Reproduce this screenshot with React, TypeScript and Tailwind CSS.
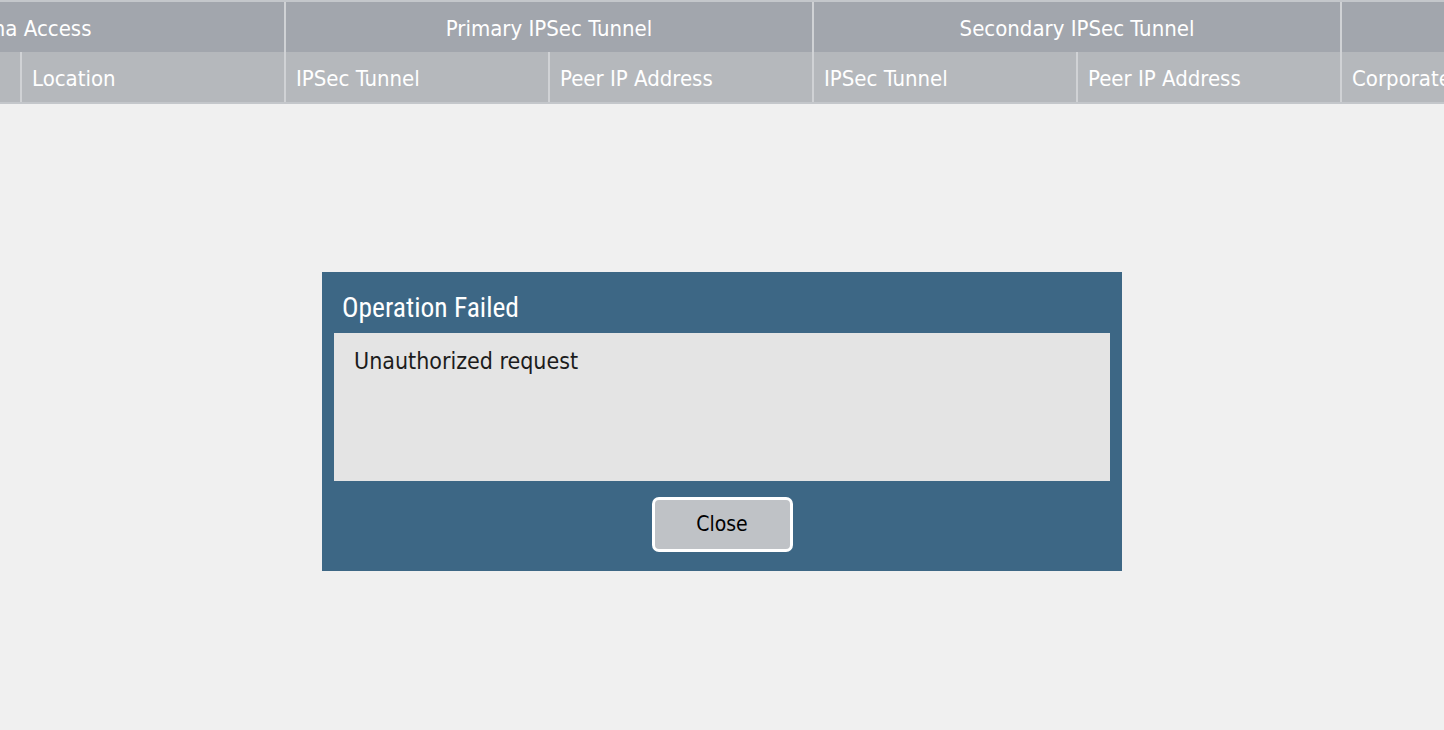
import React from "react";

const F = { fontFamily: '"DejaVu Sans Condensed", "DejaVu Sans", sans-serif', fontStretch: "condensed" as const };

export default function App() {
  const sub = ["", "Location", "IPSec Tunnel", "Peer IP Address", "IPSec Tunnel", "Peer IP Address", "Corporate Access"];
  return (
    <div className="w-[1444px] h-[730px] bg-[#f0f0f0] overflow-hidden flex flex-col" style={F}>
      <div className="w-[1444px] overflow-hidden border-t-2 border-b-2 border-[#c4c7cb] bg-[#d6d8da]">
        <div className="flex flex-col ml-[-242px] w-[1900px] text-[22px] text-white">
          <div className="flex h-[50px] bg-[#a2a6ad]">
            <div className="w-[528px] shrink-0 flex items-center justify-center pt-[3px] border-r-2 border-[#d0d2d5]">Prisma Access</div>
            <div className="w-[528px] shrink-0 flex items-center justify-center pt-[3px] border-r-2 border-[#d0d2d5]">Primary IPSec Tunnel</div>
            <div className="w-[528px] shrink-0 flex items-center justify-center pt-[3px] border-r-2 border-[#d0d2d5]">Secondary IPSec Tunnel</div>
            <div className="w-[528px] shrink-0"></div>
          </div>
          <div className="flex h-[50px] bg-[#b5b8bc]">
            {sub.map((s, i) => (
              <div key={i} className="w-[264px] shrink-0 flex items-center pl-[10px] pt-[3px] border-r-2 border-[#d0d2d5] whitespace-nowrap">{s}</div>
            ))}
          </div>
        </div>
      </div>
      <div className="flex justify-center mt-[168px]">
        <div className="w-[800px] h-[299px] bg-[#3d6785] flex flex-col px-[12px]">
          <div className="h-[61px] flex items-center pl-[8px] pt-[10px] text-white text-[27.5px]" style={{ fontFamily: '"Liberation Sans Narrow", "Roboto", sans-serif', fontStretch: "condensed" }}>
            Operation Failed
          </div>
          <div className="h-[148px] bg-[#e4e4e4] px-[20px] pt-[11px] text-[23px] text-[#1c1c1c]">Unauthorized request</div>
          <div className="flex justify-center pt-[16px]">
            <button className="w-[141px] h-[55px] rounded-[7px] border-[3px] border-white bg-[#bfc2c6] text-black text-[21px]">Close</button>
          </div>
        </div>
      </div>
    </div>
  );
}
